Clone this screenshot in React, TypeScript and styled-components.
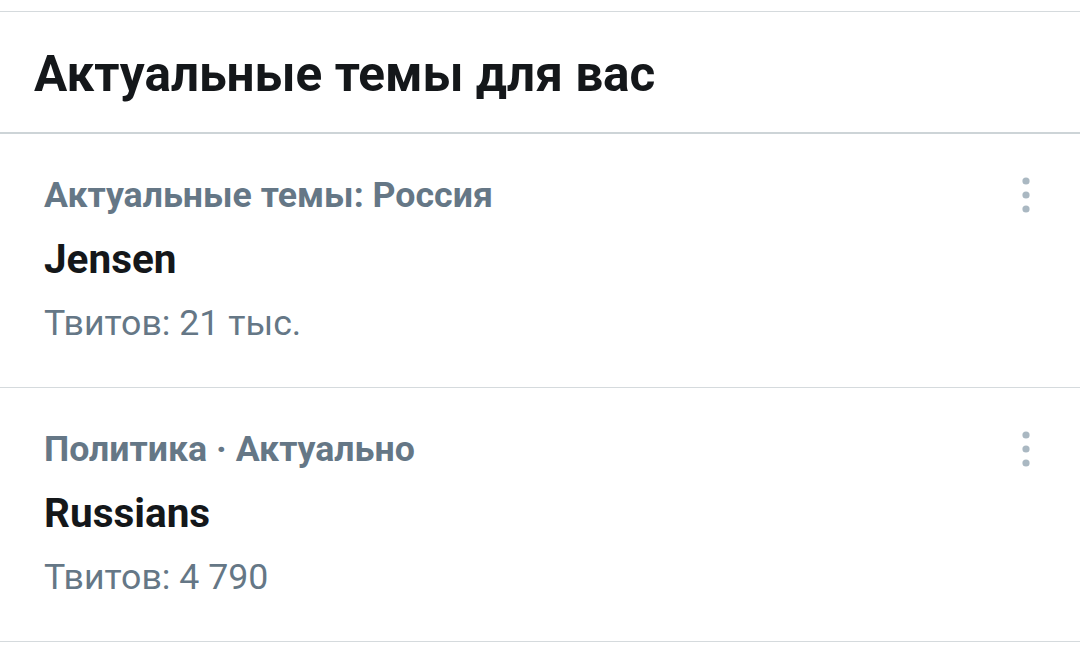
import styled, { createGlobalStyle } from 'styled-components';

const GlobalStyle = createGlobalStyle`
  html, body {
    margin: 0;
    padding: 0;
    background: #ffffff;
  }
  body {
    font-family: Roboto, "Noto Sans", Arial, sans-serif;
    -webkit-font-smoothing: antialiased;
  }
`;

const trends = [
  { id: 1, context: 'Актуальные темы: Россия', name: 'Jensen', count: 'Твитов: 21 тыс.' },
  { id: 2, context: 'Политика · Актуально', name: 'Russians', count: 'Твитов: 4 790' },
];

const MoreIcon = () => (
  <svg width="8" height="36" viewBox="0 0 8 36">
    <circle cx="4" cy="4" r="3.6" fill="#aab8c2" />
    <circle cx="4" cy="18" r="3.6" fill="#aab8c2" />
    <circle cx="4" cy="32" r="3.6" fill="#aab8c2" />
  </svg>
);

const App = () => {
  return (
    <>
      <GlobalStyle />
      <Panel>
        <Header>
          <Title>Актуальные темы для вас</Title>
        </Header>
        {trends.map((t) => (
          <TrendRow key={t.id}>
            <div className='trend-body'>
              <Context>{t.context}</Context>
              <TrendName>{t.name}</TrendName>
              <Count>{t.count}</Count>
            </div>
            <MoreButton aria-label='Ещё'>
              <MoreIcon />
            </MoreButton>
          </TrendRow>
        ))}
      </Panel>
    </>
  );
};

const Panel = styled.div`
  margin-top: 11px;
  border-top: 1px solid #d5dadd;
  background: #fff;
`;

const Header = styled.div`
  height: 120px;
  display: flex;
  align-items: center;
  padding: 0 34px;
  border-bottom: 2px solid #cdd4d7;
`;

const Title = styled.h2`
  margin: 0;
  font-size: 49.5px;
  font-weight: 700;
  color: #14171a;
  padding-top: 4px;
`;

const TrendRow = styled.div`
  display: flex;
  justify-content: space-between;
  align-items: flex-start;
  padding: 29px 50px 32px 44px;
  border-bottom: 1px solid #d5dadd;

  .trend-body {
    display: flex;
    flex-direction: column;
  }
`;

const Context = styled.div`
  font-size: 35.7px;
  line-height: 64px;
  font-weight: 700;
  color: #657786;
`;

const TrendName = styled.div`
  font-size: 40.5px;
  line-height: 64px;
  font-weight: 700;
  color: #14171a;
`;

const Count = styled.div`
  font-size: 35.7px;
  line-height: 64px;
  font-weight: 400;
  color: #657786;
`;

const MoreButton = styled.button`
  border: none;
  background: transparent;
  padding: 0;
  margin-top: 14px;
  cursor: pointer;
  display: flex;
`;

export default App;
